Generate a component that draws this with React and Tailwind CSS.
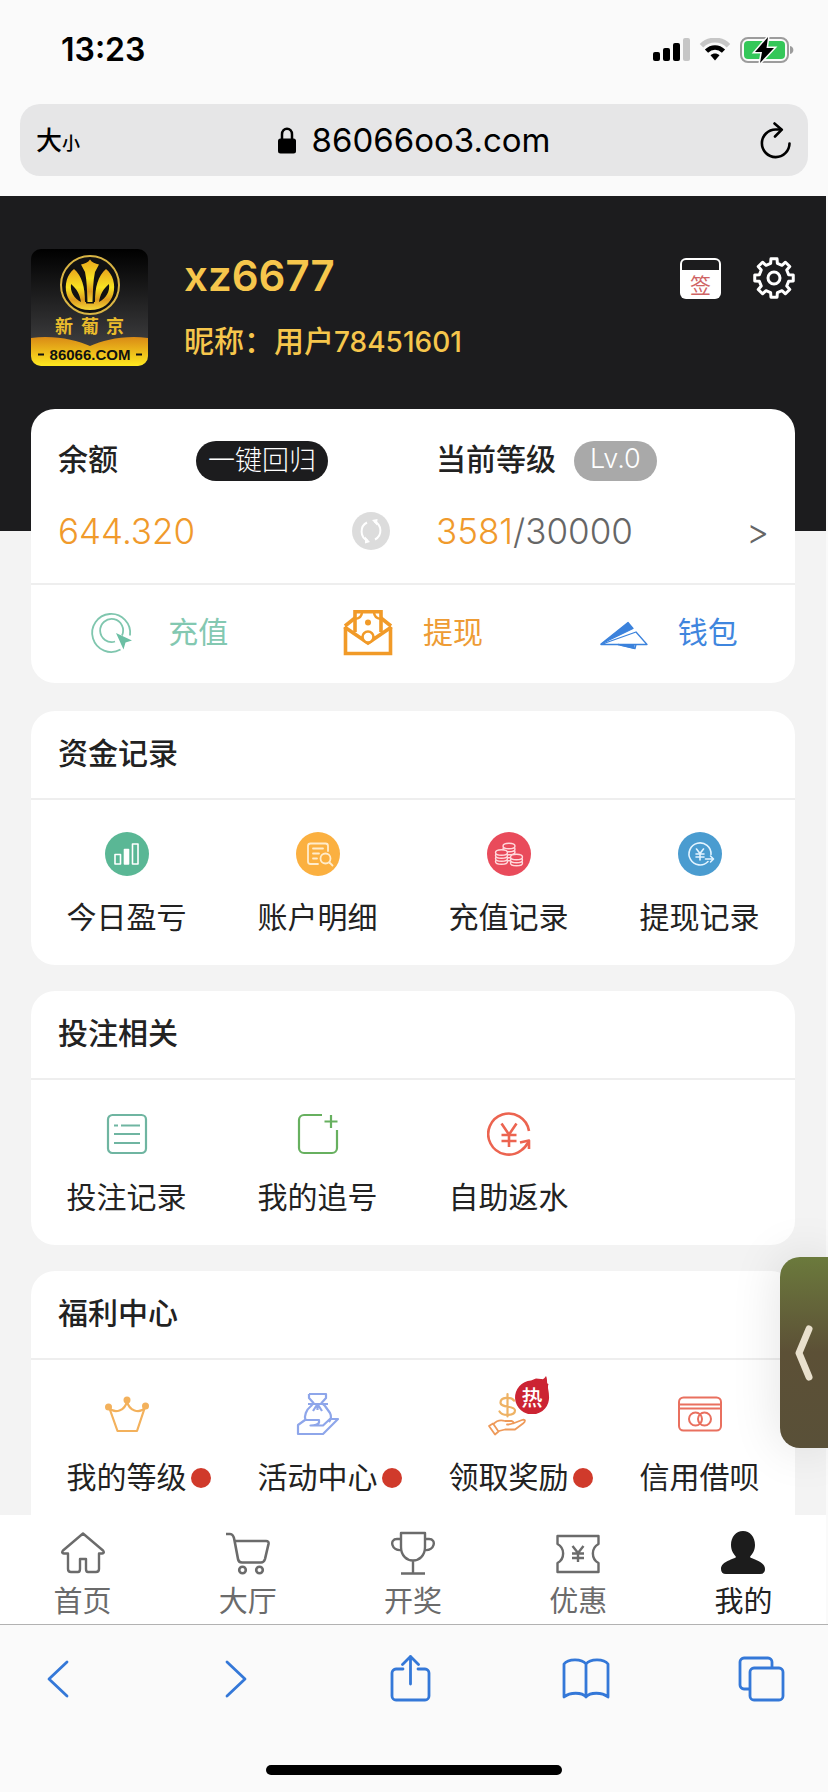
import React from 'react';

/* ---------- system icons ---------- */

const SignalIcon = () => (
  <svg width="37" height="24" viewBox="0 0 37 24">
    <rect x="0" y="14" width="7" height="9" rx="2" />
    <rect x="10" y="10" width="7" height="13" rx="2" />
    <rect x="20" y="5" width="7" height="18" rx="2" />
    <rect x="30" y="0" width="7" height="23" rx="2" fill="#c6c6c6" />
  </svg>
);

const WifiIcon = () => (
  <svg width="32" height="24" viewBox="0 0 32 24" fill="none">
    <path d="M2.5 7.8C10 .2 22 .2 29.500 7.800" stroke="#c6c6c6" strokeWidth="5" />
    <path d="M7.500 13.200C12.500 8.200 19.500 8.200 24.500 13.200" stroke="#000" strokeWidth="4.500" />
    <path d="M11.500 17.300C14 15 18 15 20.500 17.300L16 22.500Z" fill="#000" />
  </svg>
);

const BatteryIcon = () => (
  <svg width="54" height="26" viewBox="0 0 54 26">
    <rect x="1" y="1" width="47" height="24" rx="7" fill="none" stroke="#9c9c9c" strokeWidth="2" />
    <rect x="4" y="4" width="41" height="18" rx="4" fill="#34c759" />
    <path d="M50 9C54.500 10 54.500 16 50 17Z" fill="#9c9c9c" />
    <path d="M28 0L15 15H22L20 26L34 11H26.500Z" fill="#000" stroke="#fafafa" strokeWidth="3" paintOrder="stroke" />
  </svg>
);

const LockIcon = () => (
  <svg width="18" height="27" viewBox="0 0 18 27">
    <path d="M4 12V7.500C4 -.2 14 -.2 14 7.500V12" fill="none" stroke="#000" strokeWidth="2.500" />
    <rect x="0" y="11.500" width="18" height="15" rx="2.500" />
  </svg>
);

const ReloadIcon = () => (
  <svg width="32" height="37" viewBox="0 0 32 37" fill="none" stroke="#000" strokeWidth="2.600" strokeLinecap="round" strokeLinejoin="round">
    <path d="M29.500 21.500A13.800 13.800 0 1 1 15.700 7.500H21" />
    <path d="M14.500 1.500L21.800 7.700L15 14.500" />
  </svg>
);

/* ---------- header icons ---------- */

const Logo = () => (
  <svg className="size-full" viewBox="0 0 117 117" role="img" aria-label="新葡京 86066.COM">
    <defs>
      <linearGradient id="night" x1="0" y1="0" x2="0" y2="1">
        <stop offset="0" stopColor="#000" />
        <stop offset="1" stopColor="#4a4a4c" />
      </linearGradient>
      <linearGradient id="gold" x1="0" y1="0" x2="0" y2="1">
        <stop offset="0" stopColor="#e8a51c" />
        <stop offset=".45" stopColor="#f8e322" />
        <stop offset=".75" stopColor="#dd9a1f" />
        <stop offset="1" stopColor="#f5d838" />
      </linearGradient>
      <linearGradient id="band" x1="0" y1="0" x2="0" y2="1">
        <stop offset="0" stopColor="#d98a16" />
        <stop offset="1" stopColor="#ffe91f" />
      </linearGradient>
    </defs>
    <rect width="117" height="117" fill="url(#night)" />
    <circle cx="59" cy="36" r="29" fill="#111" stroke="#d9b545" strokeWidth="2" />
    <path d="M43 20C29 31 32 61 59 61C86 61 89 31 75 20C67 27 64 38 64 53H54C54 38 51 27 43 20Z" fill="url(#gold)" />
    <path d="M59 10.500C61 13.500 64 14.500 68 15.500L64 23C62 32 62 42 61.500 53H56.500C56 42 56 32 54 23L50 15.500C54 14.500 57 13.500 59 10.500Z" fill="url(#gold)" stroke="#111" strokeWidth="3" paintOrder="stroke" />
    <path d="M40 35C39 43 43 49 50 53C49 46 46 40 40 35ZM78 35C79 43 75 49 68 53C69 46 72 40 78 35Z" fill="#111" />
    <g fill="#e9bb2c" fontFamily="'Noto Sans CJK SC', sans-serif" fontSize="18" fontWeight="700" textAnchor="middle">
      <text x="33" y="84">新</text>
      <text x="59" y="84">葡</text>
      <text x="84" y="84">京</text>
    </g>
    <path d="M0 89C24 86 45 91 59 97C73 91 93 86 117 89V117H0Z" fill="url(#band)" />
    <text x="59" y="111" fill="#111" fontFamily="'Liberation Sans', sans-serif" fontSize="15" fontWeight="700" textAnchor="middle">86066.COM</text>
    <path d="M7 105.500H13M105 105.500H111" stroke="#111" strokeWidth="2" />
  </svg>
);

const CheckInIcon = () => (
  <svg width="41" height="41" viewBox="0 0 41 41">
    <rect width="41" height="41" rx="6" fill="#fff" />
    <path d="M2 12V6A4 4 0 0 1 6 2H35A4 4 0 0 1 39 6V12Z" fill="#1c1c1e" />
    <text x="20.500" y="35" fill="#cf6464" fontFamily="'Noto Sans CJK SC', sans-serif" fontSize="21" fontWeight="400" textAnchor="middle">签</text>
  </svg>
);

// eight teeth, four corners each
const gearPoints = Array.from({ length: 8 }, (_, i) =>
  [[-13, 15], [-9, 19.5], [9, 19.5], [13, 15]].map(([deg, r]) => {
    const a = ((i * 45 + deg) * Math.PI) / 180;
    return `${(21 + r * Math.sin(a)).toFixed(2)},${(21 - r * Math.cos(a)).toFixed(2)}`;
  }).join(' ')
).join(' ');

const GearIcon = () => (
  <svg width="42" height="42" viewBox="0 0 42 42" fill="none" stroke="#fff" strokeWidth="3" strokeLinejoin="round">
    <polygon points={gearPoints} />
    <circle cx="21" cy="21" r="6" />
  </svg>
);

const RefreshIcon = () => (
  <svg width="38" height="38" viewBox="0 0 38 38" fill="none">
    <circle cx="19" cy="19" r="19" fill="#dcdcdc" />
    <path d="M15 10.500A10 10 0 0 0 15.500 28.500M23 27.500A10 10 0 0 0 22.500 9.500" stroke="#fff" strokeWidth="2" />
    <path d="M13 24.500L18 30L13 31.500ZM25 13.500L20 8L25.500 7Z" fill="#fff" />
  </svg>
);

/* ---------- wallet actions ---------- */

const DepositIcon = () => (
  <svg width="50" height="46" viewBox="0 0 50 46" fill="none" stroke="#7fc6ae" strokeWidth="1.800">
    <path d="M32.500 39.500A19 19 0 1 1 42 25.500" />
    <path d="M27 31.500A11.500 11.500 0 1 1 34 25.500" />
    <path d="M28 23L44 30.500L37.500 32.500L35.500 39.500Z" fill="#6cbfa4" stroke="none" />
  </svg>
);

const WithdrawIcon = () => (
  <svg width="50" height="46" viewBox="0 0 50 46" fill="none" stroke="#f19a28" strokeWidth="3.600">
    <path d="M2.500 17V43.500H47.500V17" />
    <path d="M1.500 17L25 33L48.500 17" />
    <path d="M12 22V1.800H38V22" />
    <path d="M12 8L2 16M38 8L48 16" />
    <path d="M12 9Q19 8 19 2M38 9Q31 8 31 2M19 28A6.500 6.500 0 0 1 31 28" strokeWidth="2.400" />
    <circle cx="25" cy="27" r="5.500" fill="#fff" strokeWidth="2.600" />
    <circle cx="25" cy="12.500" r="3" fill="#f19a28" stroke="none" />
  </svg>
);

const WalletIcon = () => (
  <svg width="50" height="46" viewBox="0 0 50 46" fill="none" stroke="#3b82dc" strokeWidth="1.300" strokeLinejoin="round">
    <path d="M3 34L30 12.500L35 18.500Z" fill="#3b82dc" />
    <path d="M3 34.500L38 22L49 34.500Z" />
    <path d="M20 34.500L37 38.500L38 34.500" />
    <path d="M23 35L36 38V35.500Z" fill="#3b82dc" />
  </svg>
);

/* ---------- section icons, all on a 44px box ---------- */

const Box = ({ children, ...rest }) => (
  <svg width="44" height="44" viewBox="0 0 44 44" fill="none" strokeLinejoin="round" {...rest}>
    {children}
  </svg>
);

const ProfitIcon = () => (
  <Box stroke="#fff" strokeWidth="1.600">
    <circle cx="22" cy="22" r="22" fill="#5ab795" stroke="none" />
    <rect x="10" y="22.500" width="5.500" height="9.500" />
    <rect x="19.500" y="17.500" width="4" height="14.500" fill="#fff" />
    <rect x="27.500" y="12" width="5.500" height="20" />
  </Box>
);

const DetailIcon = () => (
  <Box stroke="#ffeccc" strokeWidth="1.800" strokeLinecap="round">
    <circle cx="22" cy="22" r="22" fill="#fbb040" stroke="none" />
    <path d="M22 32H14.500A2.500 2.500 0 0 1 12 29.500V14A2.500 2.500 0 0 1 14.500 11.500H29.500A2.500 2.500 0 0 1 32 14V19" />
    <path d="M17 16.500H27M17 21.500H23M17 26.500H21" />
    <circle cx="29.500" cy="26.500" r="5" />
    <path d="M33.500 30.500L36.500 33.500" />
  </Box>
);

const Coins = ({ x, y, rows }) => (
  <g fill="#e94b5b">
    {Array.from({ length: rows }, (_, i) => rows - i).map((n) => (
      <ellipse key={n} cx={x} cy={y + n * 3} rx="6" ry="2.800" />
    ))}
    <ellipse cx={x} cy={y} rx="6" ry="2.800" />
  </g>
);

const DepositLogIcon = () => (
  <Box stroke="#ffd9dc" strokeWidth="1.400">
    <circle cx="22" cy="22" r="22" fill="#e94b5b" stroke="none" />
    <Coins x={22} y={14} rows={4} />
    <Coins x={14.500} y={20.500} rows={3} />
    <Coins x={29.500} y={25} rows={2} />
  </Box>
);

const WithdrawLogIcon = () => (
  <Box stroke="#e3f4ff" strokeWidth="1.600" strokeLinecap="round">
    <circle cx="22" cy="22" r="22" fill="#4a9cd0" stroke="none" />
    <path d="M30 29.500A11 11 0 1 1 33 22.500" />
    <path d="M18.500 17L22 21.500L25.500 17M22 21.500V28M18 22H26M18 25H26" />
    <path d="M27.500 27H35M32.500 24L35.500 27L32.500 30" />
  </Box>
);

const BetLogIcon = () => (
  <Box stroke="#6fb5a1" strokeWidth="2.200">
    <rect x="3" y="3" width="38" height="38" rx="4.500" />
    <path d="M9 13.500H13M16 13.500H35M9 22H35M9 31H35" />
  </Box>
);

const ChaseIcon = () => (
  <Box stroke="#67b05f" strokeWidth="2.200">
    <path d="M26 3H8A5 5 0 0 0 3 8V36A5 5 0 0 0 8 41H36A5 5 0 0 0 41 36V18" />
    <path d="M35 3V16M28.500 9.500H41.500" />
  </Box>
);

const RebateIcon = () => (
  <Box stroke="#ec6450" strokeWidth="2.600">
    <path d="M42 19A20.500 20.500 0 1 0 34 38.500Q38 36 41.500 30" />
    <path d="M33 30.500L42 28.500V37" />
    <path d="M14.500 11.500L22 22.500L29.500 11.500M22 22.500V35M14.500 23H29.500M14.500 29H29.500" />
  </Box>
);

const CrownIcon = () => (
  <Box stroke="#f3b15c" strokeWidth="2.200">
    <path d="M4 15L12.500 39H32L40 15" />
    <path d="M4 16C10 22 20 19 22 9C24 19 34 22 40 16" />
    <g fill="#f3b15c" stroke="none">
      <circle cx="3.500" cy="15" r="3.500" />
      <circle cx="22" cy="8" r="3.500" />
      <circle cx="40.500" cy="14" r="3.500" />
    </g>
  </Box>
);

const ActivityIcon = () => (
  <Box stroke="#8ea6ea" strokeWidth="2.200">
    <path d="M13 2H30V6L25.500 11L29 14L34 21C36 25 34.500 28 33 30" />
    <path d="M13 2V6L17.500 11L15 14C10 18 8 24 9.500 28" />
    <path d="M12 12H32M21.500 12L17 19M21.500 12V18M21.500 12L26 19" />
    <path d="M2 42V33L9 28H23V30.500C22 33 20 33.500 14.500 33.500H27L34 27H42L27 42Z" />
  </Box>
);

const RewardIcon = () => (
  <Box stroke="#eeb264" strokeWidth="1.800" strokeLinecap="round">
    <path d="M27 8.500C24 4.500 13.500 5 13.500 10.500C13.500 16.500 28 13 28 18.500C28 24 15.500 24.500 12.500 19.500M20.500 2V24.500" strokeWidth="2.200" />
    <g stroke="#ee9a5a">
      <path d="M2 34L6 31.500L11.500 39.500L8 42.500Z" />
      <path d="M6.500 32C11 27 15 28 18 29H25C28 30 26 32.500 20 32.500M26 31.500L35 28C39 27 38.500 29.500 36 31.500L28 37.500H18L12 39" />
    </g>
  </Box>
);

const CreditIcon = () => (
  <Box stroke="#e9705f" strokeWidth="2">
    <rect x="1" y="5.500" width="42" height="33" rx="4.500" />
    <path d="M1 12.500H43M1 16.500H43" />
    <circle cx="17.500" cy="27" r="6.500" />
    <circle cx="26.500" cy="27" r="6.500" />
  </Box>
);

const HotBadge = () => (
  <svg className="absolute -top-4 left-[27px]" width="36" height="38" viewBox="0 0 36 38">
    <path d="M32 0C30 3 29 3.500 27 3L22 2.500C20 3 19 4 17 4.500A17 17 0 1 0 35 20C35 14 33 12 34.500 8C32 8 34 4 32 0Z" fill="#cc2433" />
    <text x="18" y="29" fill="#fff" fontFamily="'Noto Sans CJK SC', sans-serif" fontSize="21" fontWeight="500" textAnchor="middle">热</text>
  </svg>
);

/* ---------- tab bar ---------- */

const HomeIcon = () => (
  <Box stroke="#6b6b6b" strokeWidth="2.400">
    <path d="M22 2.500L42 19.500Q44 22 41 22.500H38V38Q38 41 35 41H27Q25 41 25 38V28H19V38Q19 41 17 41H10Q7 41 7 38V22.500H3Q0 22 2 19.500Z" />
  </Box>
);

const CartIcon = () => (
  <Box stroke="#6b6b6b" strokeWidth="2.600">
    <path d="M-1 3H4C7 3 8 6 8.500 9.500L12 28Q12.500 31.500 16 31.500H35Q38 31.500 39 28L42.500 13Q43 10 40 10H8.500" />
    <circle cx="16.500" cy="39" r="3.300" />
    <circle cx="33.500" cy="39" r="3.300" />
  </Box>
);

const TrophyIcon = () => (
  <Box stroke="#6b6b6b" strokeWidth="2.400">
    <path d="M10 2H34V16C34 34 10 34 10 16ZM10 8H6C-2 8 .5 20 10 19M34 8H38C46 8 43.500 20 34 19M22 29.500V42.500M10 42.500H34" />
  </Box>
);

const CouponIcon = () => (
  <Box stroke="#6b6b6b" strokeWidth="2.400">
    <path d="M1.500 5H42.500V13C35 17 35 28 42.500 32V41H1.500V32C9 28 9 17 1.500 13Z" />
    <path d="M16.500 15L22 22L27.500 15M22 22V31M16 22.500H28M16 27H28" />
  </Box>
);

const MeIcon = () => (
  <Box fill="#1c1c1c">
    <path d="M22 0C29 0 34 6 34 14C34 20 31 23 29 26C30 28 44 30 44 38Q44 43 39 43H5Q0 43 0 38C0 30 14 28 15 26C13 23 10 20 10 14C10 6 15 0 22 0Z" />
  </Box>
);

/* ---------- browser toolbar ---------- */

const Tool = ({ label, children }) => (
  <button type="button" aria-label={label}>
    <svg width="48" height="48" viewBox="0 0 48 48" fill="none" stroke="#3478d8" strokeWidth="2.800" strokeLinecap="round" strokeLinejoin="round">
      {children}
    </svg>
  </button>
);

const actions = [
  { label: '充值', icon: DepositIcon, color: 'text-[#83c8b1]' },
  { label: '提现', icon: WithdrawIcon, color: 'text-[#ee9c35]' },
  { label: '钱包', icon: WalletIcon, color: 'text-[#3f86de]' },
];

const sections = [
  {
    title: '资金记录',
    items: [
      { label: '今日盈亏', icon: ProfitIcon },
      { label: '账户明细', icon: DetailIcon },
      { label: '充值记录', icon: DepositLogIcon },
      { label: '提现记录', icon: WithdrawLogIcon },
    ],
  },
  {
    title: '投注相关',
    items: [
      { label: '投注记录', icon: BetLogIcon },
      { label: '我的追号', icon: ChaseIcon },
      { label: '自助返水', icon: RebateIcon },
    ],
  },
  {
    title: '福利中心',
    last: true,
    items: [
      { label: '我的等级', icon: CrownIcon, dot: true },
      { label: '活动中心', icon: ActivityIcon, dot: true },
      { label: '领取奖励', icon: RewardIcon, dot: true, hot: true },
      { label: '信用借呗', icon: CreditIcon },
    ],
  },
];

const tabs = [
  { label: '首页', icon: HomeIcon },
  { label: '大厅', icon: CartIcon },
  { label: '开奖', icon: TrophyIcon },
  { label: '优惠', icon: CouponIcon },
  { label: '我的', icon: MeIcon, active: true },
];

function Section({ title, items, last }) {
  return (
    <section className={`bg-white ${last ? 'rounded-t-3xl pb-[17px]' : 'rounded-3xl pb-[27px]'}`}>
      <h2 className="border-b-2 border-[#eeeeee] px-[27px] pt-[21px] pb-6 text-[30px] leading-[42px] font-medium">{title}</h2>
      <div className="grid grid-cols-4 pt-8">
        {items.map(({ label, icon: Icon, dot, hot }) => (
          <a key={label} href="#" className="flex flex-col items-center gap-5">
            <span className="relative">
              <Icon />
              {hot && <HotBadge />}
            </span>
            <span className="relative text-[30px] leading-[42px] whitespace-nowrap">
              {label}
              {dot && <i className="absolute top-3 left-full ml-1 size-5 rounded-full bg-[#d03a2b]" />}
            </span>
          </a>
        ))}
      </div>
    </section>
  );
}

export default function App() {
  return (
    <div className="relative min-h-screen overflow-hidden bg-[#fafafa] font-['Inter','Noto_Sans_CJK_SC',sans-serif] text-[#222222]">
      {/* Status bar */}
      <div className="flex items-center justify-between pt-8 pr-[34px] pl-[61px] text-black">
        <span className="text-[32px] leading-9 font-semibold">13:23</span>
        <div className="flex items-center gap-[9px]">
          <SignalIcon />
          <WifiIcon />
          <BatteryIcon />
        </div>
      </div>

      {/* Address bar */}
      <div className="mx-5 mt-9 mb-5 flex h-[72px] items-center justify-between rounded-[20px] bg-[#e6e6e7] px-4 text-black">
        <button type="button" className="flex w-16 items-baseline text-[26px] font-medium">
          大<span className="text-[18px]">小</span>
        </button>
        <div className="flex items-center gap-4">
          <LockIcon />
          <span className="text-[33px] leading-10">86066oo3.com</span>
        </div>
        <button type="button" aria-label="刷新" className="flex w-16 justify-end">
          <ReloadIcon />
        </button>
      </div>

      <main className="mr-0.5 bg-[#f3f3f3]">
        {/* Profile */}
        <header className="flex items-start bg-[#1c1c1e] px-[31px] pt-[53px] pb-[165px] text-[#f6c64c]">
          <div className="size-[117px] shrink-0 overflow-hidden rounded-[10px]">
            <Logo />
          </div>
          <div className="ml-9 flex-1">
            <h1 className="text-[42px] leading-[54px] font-semibold">xz6677</h1>
            <p className="mt-[18px] text-[30px] leading-10 font-medium">
              昵称：用户<span className="text-[28px]">78451601</span>
            </p>
          </div>
          <div className="mt-2 flex gap-8">
            <button type="button" aria-label="签到"><CheckInIcon /></button>
            <button type="button" aria-label="设置"><GearIcon /></button>
          </div>
        </header>

        <div className="mx-[31px] -mt-[122px] flex flex-col gap-[26px]">
          {/* Balance */}
          <section className="mb-0.5 rounded-3xl bg-white">
            <div className="grid grid-cols-[406fr_360fr] border-b-2 border-[#eeeeee] pt-7 pb-7">
              <div className="pr-[46px] pl-[27px]">
                <div className="flex items-center">
                  <h2 className="w-[138px] text-[30px] leading-10 font-medium">余额</h2>
                  <button type="button" className="mt-1 h-10 rounded-full bg-[#1c1c1e] px-3 text-[27px] leading-9 font-light text-white">一键回归</button>
                </div>
                <div className="mt-[26px] flex items-center justify-between">
                  <span className="text-[35px] leading-12 font-light text-[#f09a2c]">644.320</span>
                  <button type="button" aria-label="刷新余额"><RefreshIcon /></button>
                </div>
              </div>
              <div className="pr-[26px]">
                <div className="flex items-center">
                  <h2 className="text-[30px] leading-10 font-medium">当前等级</h2>
                  <span className="mt-1 ml-[18px] h-10 rounded-full bg-[#a9a9a9] px-4 text-[27px] leading-9 font-light text-white">Lv.0</span>
                </div>
                <a href="#" className="mt-[26px] flex items-center justify-between text-[35px] leading-12 font-light text-[#666666]">
                  <span><span className="text-[#f09a2c]">3581</span>/30000</span>
                  <span>&gt;</span>
                </a>
              </div>
            </div>
            <div className="grid grid-cols-3">
              {actions.map(({ label, icon: Icon, color }) => (
                <a key={label} href="#" className={`flex h-[98px] items-center justify-center gap-[30px] pb-[3px] text-[30px] ${color}`}>
                  <Icon />
                  <span>{label}</span>
                </a>
              ))}
            </div>
          </section>

          {sections.map((section) => (
            <Section key={section.title} {...section} />
          ))}
        </div>
      </main>

      {/* Tabs */}
      <nav className="mr-0.5 grid grid-cols-5 bg-white pt-4 pb-px">
        {tabs.map(({ label, icon: Icon, active }) => (
          <a key={label} href="#" className={`flex flex-col items-center gap-1.5 text-[29px] leading-[42px] ${active ? 'text-[#222222]' : 'text-[#6b6b6b]'}`}>
            <Icon />
            {label}
          </a>
        ))}
      </nav>

      {/* Browser toolbar */}
      <footer className="border-t border-[#b2b2b2] pt-[30px] pb-4">
        <div className="flex justify-between pr-[42px] pl-[34px]">
          <Tool label="后退"><path d="M33 7L15 24L33 41" /></Tool>
          <Tool label="前进"><path d="M17 7L35 24L17 41" /></Tool>
          <Tool label="分享">
            <path d="M17 14H10A4 4 0 0 0 6 18V41A4 4 0 0 0 10 45H39A4 4 0 0 0 43 41V18A4 4 0 0 0 39 14H32M24.500 29V1.500M16.500 9.500L24.500 1.500L32.500 9.500" />
          </Tool>
          <Tool label="书签">
            <path d="M24 9C20 3.500 6 3.500 2 9V42C8 37 20 37 24 42C28 37 40 37 46 42V9C42 3.500 28 3.500 24 9ZM24 9V42" />
          </Tool>
          <Tool label="标签页">
            <path d="M11 34H6A4 4 0 0 1 2 30V7A4 4 0 0 1 6 3H30A4 4 0 0 1 34 7V12" />
            <rect x="12" y="13" width="33" height="32" rx="4" />
          </Tool>
        </div>
        <div className="mx-auto mt-[62px] h-2.5 w-[296px] rounded-full bg-black" />
      </footer>

      {/* Floating drawer handle */}
      <button
        type="button"
        aria-label="展开"
        className="absolute right-0 bottom-[344px] flex h-[191px] w-12 items-center justify-center rounded-l-[20px] bg-linear-to-b from-[#6b7a3c] via-[#5c5036] to-[#595038] shadow-[0_0_50px_rgba(0,0,0,0.12)]"
      >
        <svg width="18" height="56" viewBox="0 0 18 56" fill="none" stroke="#e9e0cd" strokeWidth="7" strokeLinecap="round" strokeLinejoin="round">
          <path d="M14 4L4 28L14 52" />
        </svg>
      </button>
    </div>
  );
}
